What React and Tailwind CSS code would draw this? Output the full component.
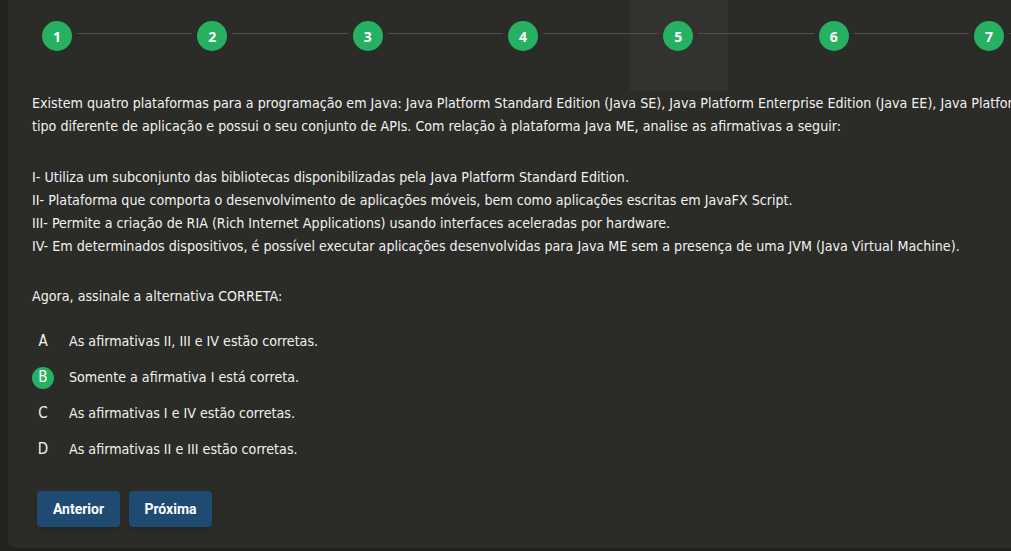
import React from 'react';

const steps = [1, 2, 3, 4, 5, 6, 7, 8];

const statements = [
  'I- Utiliza um subconjunto das bibliotecas disponibilizadas pela Java Platform Standard Edition.',
  'II- Plataforma que comporta o desenvolvimento de aplicações móveis, bem como aplicações escritas em JavaFX Script.',
  'III- Permite a criação de RIA (Rich Internet Applications) usando interfaces aceleradas por hardware.',
  'IV- Em determinados dispositivos, é possível executar aplicações desenvolvidas para Java ME sem a presença de uma JVM (Java Virtual Machine).',
];

const alternativas = [
  { letra: 'A', texto: 'As afirmativas II, III e IV estão corretas.' },
  { letra: 'B', texto: 'Somente a afirmativa I está correta.', marcada: true },
  { letra: 'C', texto: 'As afirmativas I e IV estão corretas.' },
  { letra: 'D', texto: 'As afirmativas II e III estão corretas.' },
];

const textFont = { fontFamily: '"Liberation Sans Narrow", "DejaVu Sans Condensed", sans-serif' };

export default function App() {
  return (
    <div className="w-[1011px] h-[551px] overflow-hidden bg-[#222220] pl-2">
      <div className="relative h-[548px] bg-[#2b2b27] rounded-bl-lg overflow-hidden">
        {/* faixa clara atrás do passo 5 */}
        <div className="absolute left-[622px] top-0 w-[98px] h-[91px] bg-[#32322e]" />

        {/* passos */}
        <div className="relative flex pl-[34px] pt-[21px]">
          {steps.map(n => (
            <div key={n} className="flex items-center shrink-0 w-[155.33px]">
              <div
                className="w-[30px] h-[30px] shrink-0 rounded-full bg-[#26b062] text-white flex items-center justify-center text-[14px] font-bold"
                style={{ fontFamily: '"Open Sans", sans-serif' }}
              >
                {n}
              </div>
              <div className="flex-1 mx-[5px] h-px bg-[#4f4f4b] -translate-y-[3px]" />
            </div>
          ))}
        </div>

        {/* enunciado */}
        <div className="relative pl-6 pt-[41px] text-[14.15px] leading-[23.3px] text-[#f2f2f2]" style={textFont}>
          <p className="whitespace-nowrap">
            Existem quatro plataformas para a programação em Java: Java Platform Standard Edition (Java SE), Java Platform Enterprise Edition (Java EE), Java Platform Micro Edition (Java ME). Cada plataforma é destinada a um
          </p>
          <p className="whitespace-nowrap">
            tipo diferente de aplicação e possui o seu conjunto de APIs. Com relação à plataforma Java ME, analise as afirmativas a seguir:
          </p>
          <div className="h-[27px]" />
          {statements.map(s => (
            <p key={s} className="whitespace-nowrap">{s}</p>
          ))}
          <div className="h-[26px]" />
          <p>Agora, assinale a alternativa CORRETA:</p>

          <div className="mt-[23px] flex flex-col gap-[13.8px]">
            {alternativas.map(a => (
              <div key={a.letra} className="flex items-center h-[22px]">
                <div
                  className={
                    'w-[22px] h-[22px] rounded-full flex items-center justify-center text-[15px] ' +
                    (a.marcada ? 'bg-[#26b062] text-white' : 'text-[#f2f2f2]')
                  }
                >
                  {a.letra}
                </div>
                <span className="ml-[15px]">{a.texto}</span>
              </div>
            ))}
          </div>
        </div>

        {/* botões */}
        <div className="relative flex gap-[9px] pl-[29px] mt-[31px]" style={{ fontFamily: 'Roboto, sans-serif' }}>
          <button className="w-[83px] h-9 rounded bg-[#1f4a72] text-white text-[14px] font-bold shadow-md">
            Anterior
          </button>
          <button className="w-[83px] h-9 rounded bg-[#1f4a72] text-white text-[14px] font-bold shadow-md">
            Próxima
          </button>
        </div>
      </div>
    </div>
  );
}
